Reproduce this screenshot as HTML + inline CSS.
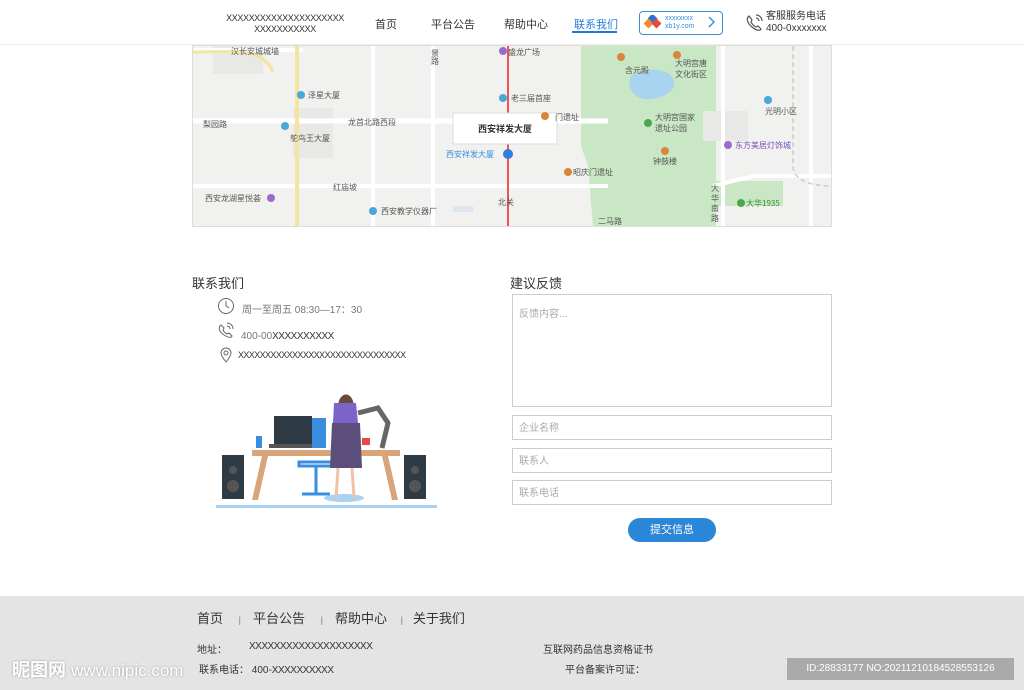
<!DOCTYPE html>
<html><head><meta charset="utf-8"><style>
body{margin:0;width:1024px;height:690px;background:#fff;font-family:"Liberation Sans","Noto Sans CJK SC",sans-serif;position:relative;overflow:hidden;color:#333}
.a{position:absolute;white-space:nowrap}
.nav{font-size:11px;color:#333}
.inp{position:absolute;left:512px;height:25px;border:1px solid #ccc;font-size:10px;color:#aaa;line-height:25px;padding-left:6px;box-sizing:border-box;width:320px}
</style></head><body>
<div class="a" style="left:226px;top:13px;font-size:9px;line-height:11px;text-align:center;width:118px;letter-spacing:-0.4px">XXXXXXXXXXXXXXXXXXXXX<br>XXXXXXXXXXX</div>
<div class="a nav" style="left:375px;top:16px">首页</div>
<div class="a nav" style="left:431px;top:16px">平台公告</div>
<div class="a nav" style="left:504px;top:16px">帮助中心</div>
<div class="a nav" style="left:574px;top:16px;color:#1f7bd8">联系我们</div>
<div class="a" style="left:572px;top:31px;width:45px;height:2px;background:#1f7bd8"></div>
<div class="a" style="left:639px;top:11px;width:82px;height:22px;border:1px solid #3b8ee0;border-radius:4px"></div>
<svg class="a" style="left:644px;top:15px" width="18" height="16"><rect x="5" y="0" width="7" height="7" transform="rotate(45 8.5 3.5)" fill="#2f6fd6"/><rect x="1" y="5" width="7" height="7" transform="rotate(45 4.5 8.5)" fill="#f08c2a"/><rect x="9" y="5" width="7" height="7" transform="rotate(45 12.5 8.5)" fill="#e64a3b"/></svg>
<div class="a" style="left:665px;top:15px;font-size:7px;color:#3b8ee0;line-height:8px">xxxxxxxx<br>xb1y.com</div>
<svg class="a" style="left:707px;top:15px" width="8" height="14" fill="none" stroke="#3b8ee0" stroke-width="1.5"><path d="M2 2l5 5-5 5"/></svg>
<svg class="a" style="left:745px;top:13px" width="20" height="18" fill="none" stroke="#555" stroke-width="1.2"><path d="M4 3c-3 2-2 7 3 11s8 4 9 2l-3-3-2 1c-2-1-4-3-5-5l1-2z"/><path d="M11 2a6 6 0 0 1 6 6M11 5a3 3 0 0 1 3 3"/></svg>
<div class="a" style="left:766px;top:11px;font-size:10px;line-height:12px">客服服务电话<br>400-0xxxxxxx</div>
<div class="a" style="left:0;top:44px;width:1024px;height:1px;background:#eee"></div>
<svg class="a" style="left:192px;top:45px;border:1px solid #ddd" width="638" height="180">
<rect width="638" height="180" fill="#f1f1ef"/>
<path d="M388 0h135v180H400l-5-60 -7-20z" fill="#c9e7c4"/>
<path d="M438 30c15-10 40-8 43 5s-20 20-30 18-18-10-13-23z" fill="#a8d4f0"/>
<path d="M520 135h70v25h-70z" fill="#c9e7c4"/>
<path d="M20 0h50v28H20zM100 62h40v50h-40zM510 65h45v30h-45zM640 60h40v70h-40z" fill="#e8e8e6"/>
<path d="M0 75h415" stroke="#fff" stroke-width="5"/>
<path d="M0 140h415M0 4h110M520 140l40-10h78" stroke="#fff" stroke-width="4" fill="none"/>
<path d="M180 0v180M240 0v180M530 0v180M618 0v180" stroke="#fff" stroke-width="4"/>
<path d="M104 0v180" stroke="#f5e3a0" stroke-width="4"/>
<path d="M0 6c40 0 70-5 80 20" stroke="#f5e3a0" stroke-width="3" fill="none"/>
<path d="M315 0v180" stroke="#e55" stroke-width="2"/>
<path d="M600 0v120c0 15 20 20 38 20" stroke="#ccc" stroke-width="1.5" stroke-dasharray="5 3" fill="none"/>
<path d="M260 160h20v6h-20z" fill="#dde6f0"/>
<rect x="260" y="67" width="104" height="31" fill="#fff" stroke="#ddd"/>
<text x="312" y="86" font-size="9" text-anchor="middle" fill="#333" font-family="Noto Sans CJK SC" font-weight="bold">西安祥发大厦</text>
<circle cx="315" cy="108" r="5" fill="#2f7fe0"/>
<g font-size="8" fill="#555" font-family="Noto Sans CJK SC">
<text x="38" y="8">汉长安城城墙</text><text x="115" y="52">泽星大厦</text><text x="10" y="81">梨园路</text><text x="155" y="79">龙首北路西段</text><text x="97" y="95">鸵鸟王大厦</text><text x="140" y="144">红庙坡</text><text x="12" y="155">西安龙湖星悦荟</text><text x="188" y="168">西安教学仪器厂</text><text x="238" y="10">景</text><text x="238" y="18">路</text><text x="315" y="9">盛龙广场</text><text x="318" y="55">老三届首座</text><text x="253" y="111" fill="#3a8ee0">西安祥发大厦</text><text x="305" y="159">北关</text><text x="362" y="74">门遗址</text><text x="432" y="27">含元殿</text><text x="482" y="20">大明宫唐</text><text x="482" y="31">文化街区</text><text x="572" y="68">光明小区</text><text x="462" y="74">大明宫国家</text><text x="462" y="85">遗址公园</text><text x="542" y="102" fill="#7a4fbf">东方美居灯饰城</text><text x="460" y="118">钟鼓楼</text><text x="380" y="129">昭庆门遗址</text><text x="518" y="145">大</text><text x="518" y="155">华</text><text x="518" y="165">南</text><text x="518" y="175">路</text><text x="553" y="160" fill="#3a8a3a">大华1935</text><text x="405" y="178">二马路</text></g>
<g fill="#4aa8d8"><circle cx="108" cy="49" r="4"/><circle cx="92" cy="80" r="4"/><circle cx="310" cy="52" r="4"/><circle cx="180" cy="165" r="4"/><circle cx="575" cy="54" r="4"/></g>
<g fill="#d9863a"><circle cx="428" cy="11" r="4"/><circle cx="484" cy="9" r="4"/><circle cx="472" cy="105" r="4"/><circle cx="375" cy="126" r="4"/><circle cx="352" cy="70" r="4"/></g>
<g fill="#9a6ad0"><circle cx="310" cy="5" r="4"/><circle cx="78" cy="152" r="4"/><circle cx="535" cy="99" r="4"/></g>
<circle cx="548" cy="157" r="4" fill="#4aa84a"/><circle cx="455" cy="77" r="4" fill="#4aa84a"/>
</svg>
<div class="a" style="left:192px;top:273px;font-size:13px">联系我们</div>
<div class="a" style="left:510px;top:273px;font-size:13px">建议反馈</div>
<svg class="a" style="left:217px;top:297px" width="18" height="18" fill="none" stroke="#666"><circle cx="9" cy="9" r="7.5"/><path d="M9 4v5l3 2"/></svg>
<div class="a" style="left:242px;top:301px;font-size:10px;color:#777">周一至周五 08:30—17：30</div>
<svg class="a" style="left:217px;top:322px" width="18" height="16" fill="none" stroke="#666"><path d="M4 3c-3 2-2 7 3 10s7 3 8 1l-3-3-2 1c-2-1-3-2-4-4l1-2z"/><path d="M10 1a6 6 0 0 1 6 6M10 4a3 3 0 0 1 3 3"/></svg>
<div class="a" style="left:241px;top:331px;font-size:10px;color:#777">400-00<span style="color:#333;letter-spacing:-0.5px">XXXXXXXXXX</span></div>
<svg class="a" style="left:219px;top:347px" width="14" height="16" fill="none" stroke="#666"><path d="M7 15C3 10 2 8 2 6a5 5 0 0 1 10 0c0 2-1 4-5 9z"/><circle cx="7" cy="6" r="2"/></svg>
<div class="a" style="left:238px;top:350px;font-size:9px;letter-spacing:-0.6px">XXXXXXXXXXXXXXXXXXXXXXXXXXXXXXX</div>
<svg class="a" style="left:214px;top:378px" width="225" height="132">
<rect x="2" y="127" width="221" height="3" fill="#a9d2f3"/>
<rect x="8" y="77" width="22" height="44" fill="#2f3b44"/><circle cx="19" cy="92" r="4" fill="#555"/><circle cx="19" cy="108" r="6" fill="#555"/>
<rect x="190" y="77" width="22" height="44" fill="#2f3b44"/><circle cx="201" cy="92" r="4" fill="#555"/><circle cx="201" cy="108" r="6" fill="#555"/>
<rect x="38" y="72" width="148" height="6" fill="#d8a47a"/>
<path d="M48 78l-10 44h6l10-44zM168 78l10 44h6l-10-44z" fill="#d8a47a"/>
<path d="M60 38h38v28H60z" fill="#2f3b44"/><path d="M55 66h50v4H55z" fill="#555"/>
<rect x="42" y="58" width="6" height="12" fill="#3a8ee0"/>
<rect x="98" y="40" width="14" height="30" fill="#3a8ee0"/><path d="M85 84h35v4H85zM102 88v28M88 116h28" stroke="#3a8ee0" stroke-width="3" fill="none"/>
<ellipse cx="130" cy="120" rx="20" ry="4" fill="#a9d2f3"/>
<path d="M124 30c0-18 16-18 16 0l2 15-18 0z" fill="#6b4a3a"/>
<path d="M120 25h22l4 40h-28z" fill="#7b63c9"/><path d="M118 45h28l2 45h-32z" fill="#5b4e7a"/>
<path d="M124 90l-2 30M138 90l2 30" stroke="#f2c2a8" stroke-width="3"/>
<path d="M144 35l20 -5 10 15 -6 25" stroke="#666" stroke-width="5" fill="none"/>
<rect x="148" y="60" width="8" height="7" fill="#e44"/>
</svg>
<div class="a" style="left:512px;top:294px;width:320px;height:113px;border:1px solid #ccc;box-sizing:border-box;font-size:10px;color:#aaa;padding:10px 6px">反馈内容...</div>
<div class="inp" style="top:415px">企业名称</div>
<div class="inp" style="top:448px">联系人</div>
<div class="inp" style="top:480px">联系电话</div>
<div class="a" style="left:628px;top:518px;width:88px;height:24px;background:#2b86d8;border-radius:12px;color:#fff;font-size:11px;text-align:center;line-height:24px">提交信息</div>
<div class="a" style="left:0;top:596px;width:1024px;height:94px;background:#e4e4e4"></div>
<div class="a" style="left:197px;top:608px;font-size:13px;color:#333">首页 <span style="font-size:9px;color:#777;margin:0 12px">|</span>平台公告 <span style="font-size:9px;color:#777;margin:0 12px">|</span>帮助中心 <span style="font-size:9px;color:#777;margin:0 10px">|</span>关于我们</div>
<div class="a" style="left:197px;top:641px;font-size:10px">地址：</div>
<div class="a" style="left:249px;top:641px;font-size:10px;letter-spacing:-0.5px">XXXXXXXXXXXXXXXXXXXX</div>
<div class="a" style="left:199px;top:661px;font-size:10px">联系电话： 400-<span style="letter-spacing:-0.5px">XXXXXXXXXX</span></div>
<div class="a" style="left:543px;top:641px;font-size:10px">互联网药品信息资格证书</div>
<div class="a" style="left:565px;top:661px;font-size:10px">平台备案许可证：</div>
<div class="a" style="left:12px;top:656px;font-size:18px;color:#fff;font-weight:bold;text-shadow:0 0 2px #999">昵图网 <span style="font-size:17px;font-weight:normal">www.nipic.com</span></div>
<div class="a" style="left:787px;top:658px;width:227px;height:22px;background:#aaa;color:#fff;font-size:10px;line-height:22px;text-align:center">ID:28833177 NO:20211210184528553126</div>
</body></html>
